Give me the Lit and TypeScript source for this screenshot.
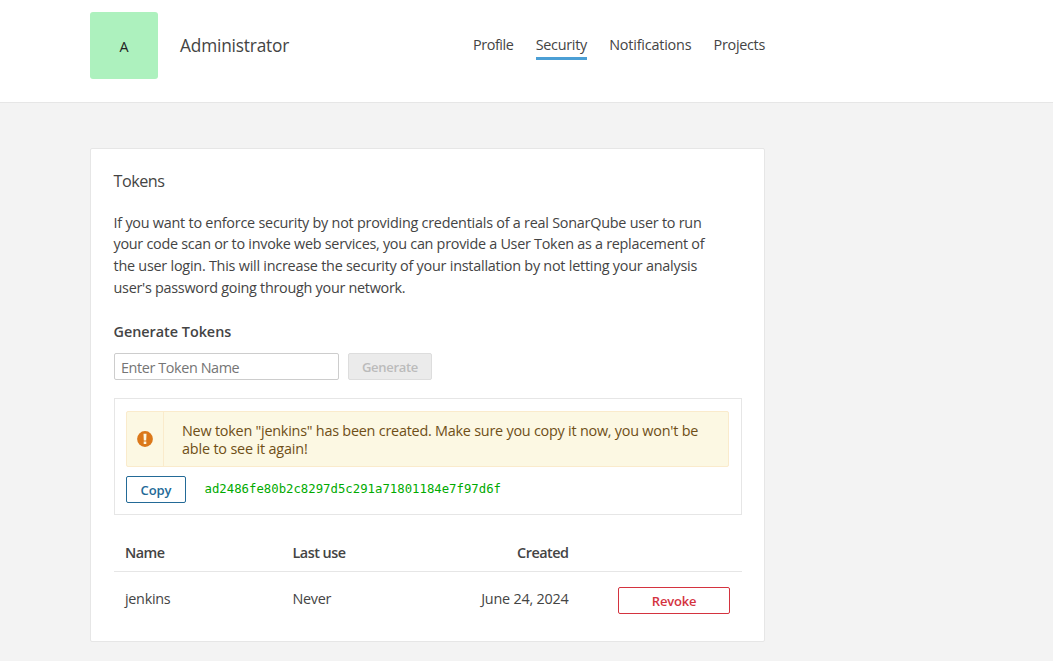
import { LitElement, html, css } from "lit";
import { customElement, property } from "lit/decorators.js";

const base = css`
  :host { display: block; font-family: "Open Sans", "Noto Sans", sans-serif; font-size: 14.4px; color: #444; letter-spacing: -0.3px; }
  * { box-sizing: border-box; }
`;

@customElement("account-header")
class AccountHeader extends LitElement {
  static styles = [base, css`
    .bar { height: 103px; background: #fff; border-bottom: 1px solid #e6e6e6; padding: 12px 288px 0 90px; display: flex; align-items: flex-start; white-space: nowrap; }
    .avatar { width: 68px; height: 67px; border-radius: 3px; background: #adf1be; color: #222; display: flex; align-items: center; justify-content: center; padding-top: 1px; }
    .name { font-size: 17.3px; line-height: 24px; margin: 22px 0 0 22px; letter-spacing: -0.18px; }
    .tabs { display: flex; gap: 22.3px; margin: 22px 0 0 auto; }
    .tab { line-height: 22px; height: 26px; color: #444; text-decoration: none; }
    .narrow { letter-spacing: -0.42px; }
    .wide { letter-spacing: -0.2px; }
    .active { border-bottom: 3px solid #4b9fd5; }
  `];
  render() {
    return html`<header class="bar">
      <div class="avatar">A</div>
      <div class="name">Administrator</div>
      <nav class="tabs">
        <a class="tab narrow">Profile</a><a class="tab active">Security</a><a class="tab wide">Notifications</a><a class="tab">Projects</a>
      </nav>
    </header>`;
  }
}

@customElement("new-token")
class NewToken extends LitElement {
  @property() name = "";
  @property() value = "";
  static styles = [base, css`
    .box { border: 1px solid #e6e6e6; height: 117px; padding: 12px 12px 0 11px; }
    .alert { display: flex; height: 56px; border: 1px solid #faebcc; border-radius: 2px; background: #fcf8e3; color: #6f4f17; }
    .icon { width: 37px; border-right: 1px solid #faebcc; display: flex; align-items: center; justify-content: center; }
    .message { padding: 10px 0 0 18px; line-height: 18px; white-space: nowrap; letter-spacing: -0.23px; }
    .rest { letter-spacing: -0.17px; }
    .row { display: flex; margin-top: 9px; }
    .copy { width: 60px; height: 27px; border: 1px solid #236a97; border-radius: 2px; background: #fff; color: #236a97; font: 600 13px/25px "Open Sans", sans-serif; padding: 1px 0 0; letter-spacing: -0.1px; }
    .code { font: 12.32px/24px "DejaVu Sans Mono", monospace; letter-spacing: 0; color: #00aa00; margin: 1px 0 0 18.5px; }
  `];
  render() {
    return html`<div class="box">
      <div class="alert" role="alert">
        <div class="icon"><svg width="16" height="16" viewBox="0 0 16 16"><circle cx="8" cy="8" r="7.9" fill="#db781a"/><path d="M6.5 2.8h3l-.3 6.6H6.8zM6.7 10.6h2.6v2.4H6.7z" fill="#fcf8e3"/></svg></div>
        <div class="message">New token "${this.name}" has been created. Make sure you copy it now, you won't be<br><span class="rest">able to see it again!</span></div>
      </div>
      <div class="row"><button class="copy">Copy</button><code class="code">${this.value}</code></div>
    </div>`;
  }
}

@customElement("app-root")
class AppRoot extends LitElement {
  static styles = [base, css`
    .page { height: 661px; background: #f3f3f3; overflow: hidden; }
    .card { width: 675px; height: 494px; margin: 45px 0 0 90px; background: #fff; border: 1px solid #e6e6e6; border-radius: 2px; padding: 20px 22px 0 23px; white-space: nowrap; }
    .title { font-size: 16.2px; line-height: 24px; font-weight: 400; margin: 0 0 0 -0.5px; letter-spacing: -0.5px; }
    .intro { margin: 18.6px 0 0 -0.5px; line-height: 21.75px; }
    .line { display: block; letter-spacing: -0.275px; }
    .loose { letter-spacing: -0.238px; }
    .subtitle { font-size: 14.4px; font-weight: 600; line-height: 22px; margin: 22.8px 0 0 -0.5px; letter-spacing: -0.02px; }
    .form { display: flex; gap: 9px; margin: 10px 0 18px; }
    .field { width: 225px; height: 27px; border: 1px solid #cdcdcd; border-radius: 2px; padding: 2px 6px 0; font: 14.4px "Open Sans", sans-serif; letter-spacing: -0.4px; }
    .field::placeholder { color: #757575; opacity: 1; }
    .generate { width: 84px; height: 27px; border: 1px solid #ddd; border-radius: 2px; background: #ebebeb; color: #bbb; font: 600 13px/25px "Open Sans", sans-serif; padding: 1px 0 0; letter-spacing: -0.3px; }
    .table { margin-top: 22px; }
    .tr { display: grid; grid-template-columns: 167.5px 164px 112px 1fr; padding: 0 12px 0 11px; }
    .head { height: 35px; border-bottom: 1px solid #e6e6e6; font-weight: 600; line-height: 32px; letter-spacing: -0.5px; }
    .body { line-height: 54px; }
    .right { text-align: right; }
    .date { letter-spacing: -0.22px; }
    .revoke { width: 112px; height: 27px; margin: 15px 0 0; justify-self: end; border: 1px solid #d4333f; border-radius: 2px; background: #fff; color: #d4333f; font: 600 13px/25px "Open Sans", sans-serif; padding: 1px 0 0; letter-spacing: -0.2px; }
  `];
  render() {
    return html`<div class="page">
      <account-header></account-header>
      <main class="card">
        <h2 class="title">Tokens</h2>
        <p class="intro">
          <span class="line loose">If you want to enforce security by not providing credentials of a real SonarQube user to run</span>
          <span class="line">your code scan or to invoke web services, you can provide a User Token as a replacement of</span>
          <span class="line loose">the user login. This will increase the security of your installation by not letting your analysis</span>
          <span class="line">user's password going through your network.</span>
        </p>
        <h3 class="subtitle">Generate Tokens</h3>
        <div class="form"><input class="field" placeholder="Enter Token Name"><button class="generate">Generate</button></div>
        <new-token name="jenkins" value="ad2486fe80b2c8297d5c291a71801184e7f97d6f"></new-token>
        <div class="table">
          <div class="tr head"><span>Name</span><span>Last use</span><span class="right">Created</span></div>
          <div class="tr body"><span>jenkins</span><span>Never</span><span class="right date">June 24, 2024</span><button class="revoke">Revoke</button></div>
        </div>
      </main>
    </div>`;
  }
}
